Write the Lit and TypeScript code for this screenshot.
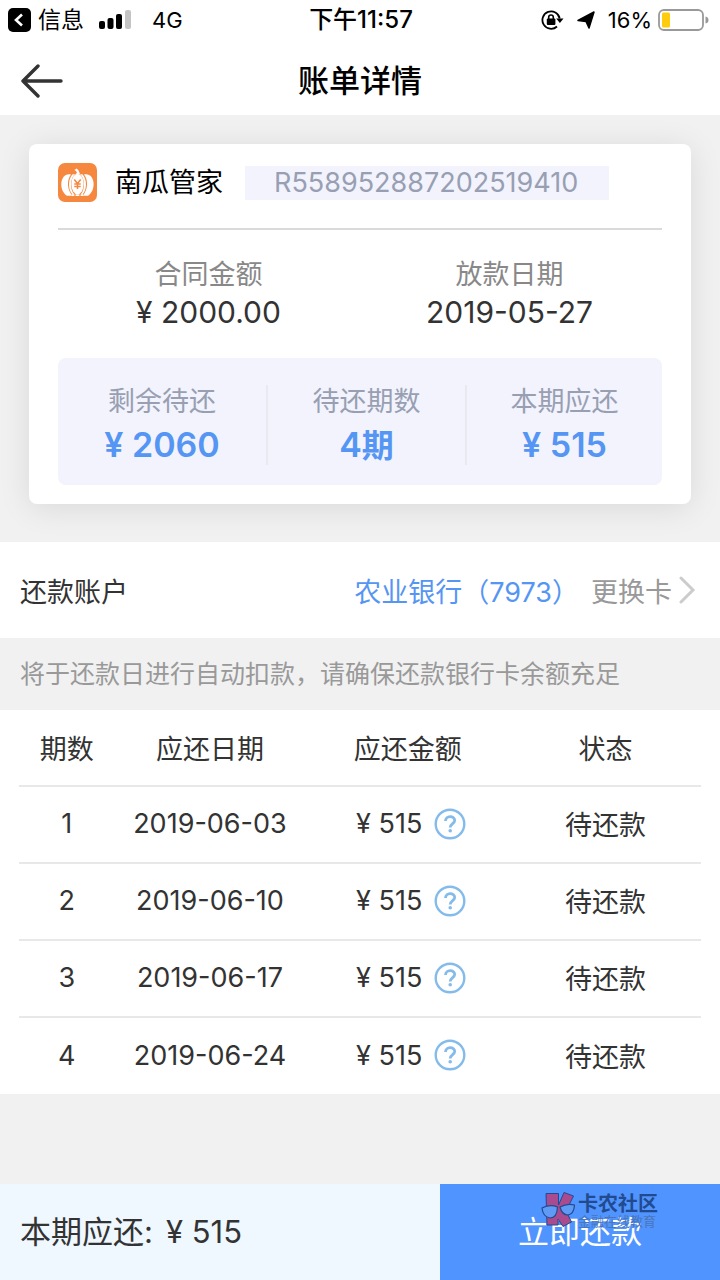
import { LitElement, html, css, svg } from "lit";
import { customElement, state } from "lit/decorators.js";

interface Installment {
  no: number;
  date: string;
  amount: string;
  status: string;
}

const base = css`
  :host {
    display: block;
    box-sizing: border-box;
  }
  *,
  *::before,
  *::after {
    box-sizing: border-box;
  }
  button {
    font: inherit;
    color: inherit;
    background: none;
    border: 0;
    padding: 0;
    cursor: pointer;
  }
  svg {
    display: block;
    flex: none;
  }
`;

@customElement("status-bar")
class StatusBar extends LitElement {
  static styles = [
    base,
    css`
      .bar {
        display: grid;
        grid-template-columns: 1fr auto 1fr;
        align-items: center;
        height: 40px;
        padding: 0 10px 0 8px;
        font-size: 22px;
        line-height: 40px;
        color: #000;
      }
      .side {
        display: flex;
        align-items: center;
      }
      .end {
        justify-content: flex-end;
      }
      .app {
        margin: 0 15px 0 7px;
        font-size: 23px;
      }
      .net {
        margin-left: 20px;
      }
      .time {
        padding-left: 4px;
        font-size: 24px;
        font-weight: 500;
      }
      .arrow {
        margin: 0 13px;
      }
      .pct {
        margin-right: 6px;
      }
    `,
  ];

  render() {
    return html`<div class="bar">
      <div class="side">
        <svg width="23" height="24" viewBox="0 0 23 24">
          <rect width="23" height="24" rx="5" />
          <path d="M14 6.500 L8 12 L14 17.500" fill="none" stroke="#fff" stroke-width="2.600" />
        </svg>
        <span class="app">信息</span>
        <svg width="33" height="20" viewBox="0 0 33 20">
          <rect x="0" y="11" width="6" height="8" rx="2" />
          <rect x="8.500" y="8" width="6" height="11" rx="2" />
          <rect x="17" y="4" width="6" height="15" rx="2" />
          <rect x="26" y="0" width="6" height="19" rx="2" fill="#c4c4c4" />
        </svg>
        <span class="net">4G</span>
      </div>
      <span class="time">下午11:57</span>
      <div class="side end">
        <svg width="23" height="20" viewBox="0 0 23 20">
          <path d="M18.700 8.500 A8.700 8.700 0 1 0 16 16.500" fill="none" stroke="#000" stroke-width="1.800" />
          <path d="M15.200 8.500 H22.500 L18.900 13 Z" />
          <rect x="5.800" y="8.500" width="8.600" height="6.500" rx="1" />
          <path d="M7.700 9 V7.300 A2.300 2.300 0 0 1 12.300 7.300 V9" fill="none" stroke="#000" stroke-width="1.600" />
        </svg>
        <svg class="arrow" width="18" height="18" viewBox="0 0 18 18">
          <path d="M17 1 L12 17 L9 10.500 L1 9.500 Z" stroke="#000" stroke-width="1.500" stroke-linejoin="round" />
        </svg>
        <span class="pct">16%</span>
        <svg width="52" height="22" viewBox="0 0 52 22">
          <rect x="1" y="1" width="44" height="20" rx="5" fill="none" stroke="#999" stroke-width="1.800" />
          <rect x="4" y="3.500" width="8" height="15" rx="1.500" fill="#fecb0e" />
          <path d="M47.500 7.500 Q50.500 8 50.500 11 T47.500 14.500 Z" fill="#999" />
        </svg>
      </div>
    </div>`;
  }
}

@customElement("loan-card")
class LoanCard extends LitElement {
  static styles = [
    base,
    css`
      .card {
        padding: 19px 29px;
        background: #fff;
        border-radius: 8px;
        box-shadow: 0 4px 32px rgba(0, 0, 0, 0.1);
      }
      .head {
        display: flex;
        align-items: center;
        padding-bottom: 26px;
        border-bottom: 2px solid #dadada;
      }
      .name {
        margin: 0 22px 0 18px;
        font-size: 27px;
        line-height: 38px;
        font-weight: 400;
        color: #000;
      }
      .number {
        padding: 0 31px 0 29px;
        font-size: 27px;
        line-height: 34px;
        color: #989fb3;
        background: #f2f3fc;
      }
      dl,
      dd {
        margin: 0;
      }
      .facts {
        display: grid;
        grid-template-columns: 1fr 1fr;
        padding: 26px 2px 28px 0;
        text-align: center;
      }
      dt {
        font-size: 27px;
        line-height: 38px;
        color: #888;
      }
      .facts dd {
        font-size: 30px;
        line-height: 36px;
        color: #333;
      }
      .summary {
        display: grid;
        grid-template-columns: 210px 199px 1fr;
        padding: 27px 0 20px;
        text-align: center;
        background: #f2f3fc;
        border-radius: 8px;
      }
      .summary dt {
        margin-bottom: 6px;
        line-height: 34px;
        color: #989fb3;
      }
      .summary dd {
        font-size: 34px;
        line-height: 40px;
        font-weight: 600;
        color: #5595f3;
      }
      .cell {
        height: 80px;
        border-right: 2px solid #e9eaf0;
      }
      .cell:last-child {
        border: 0;
      }
      .cell .cjk {
        font-size: 32px;
      }
    `,
  ];

  render() {
    return html`<section class="card">
      <div class="head">
        <svg width="39" height="39" viewBox="0 0 39 39" aria-hidden="true">
          <rect width="39" height="39" rx="7" fill="#f5873f" />
          <g fill="#fff">
            <path d="M13 11.500 C2 9 0 27 9 32.800 H14.500 C9 27 8.500 17 13 11.500 Z" />
            <path d="M26 11.500 C37 9 39 27 30 32.800 H24.500 C30 27 30.500 17 26 11.500 Z" />
            <path d="M14.300 11.500 C9.800 17 9.800 27 15 32 L16 31 C11.800 26 11.800 16 17 11 Z" />
            <path d="M24.700 11.500 C29.200 17 29.200 27 24 32 L23 31 C27.200 26 27.200 16 22 11 Z" />
            <ellipse cx="19.500" cy="21" rx="6.200" ry="10.300" />
            <path d="M18 11 C20 9 18 8 16.500 7 L18.500 5.500 C21 7 21 9 22 11 Z" />
            <path d="M14 31.300 H25 V33 H14 Z" />
          </g>
          <path d="M16.300 16.500 L19.500 20.500 L22.700 16.500 M19.500 20.500 V26 M16.300 21 H22.700 M16.300 23.500 H22.700" fill="none" stroke="#f5873f" stroke-width="1.500" />
          <path d="M17 31 V33 M22 31 V33" stroke="#f5873f" stroke-width="1.200" />
        </svg>
        <h2 class="name">南瓜管家</h2>
        <span class="number">R558952887202519410</span>
      </div>
      <dl class="facts">
        <div><dt>合同金额</dt><dd>¥ 2000.00</dd></div>
        <div><dt>放款日期</dt><dd>2019-05-27</dd></div>
      </dl>
      <dl class="summary">
        <div class="cell"><dt>剩余待还</dt><dd>¥ 2060</dd></div>
        <div class="cell"><dt>待还期数</dt><dd>4<span class="cjk">期</span></dd></div>
        <div class="cell"><dt>本期应还</dt><dd>¥ 515</dd></div>
      </dl>
    </section>`;
  }
}

@customElement("repayment-plan")
class RepaymentPlan extends LitElement {
  @state() private rows: Installment[] = [
    { no: 1, date: "2019-06-03", amount: "¥ 515", status: "待还款" },
    { no: 2, date: "2019-06-10", amount: "¥ 515", status: "待还款" },
    { no: 3, date: "2019-06-17", amount: "¥ 515", status: "待还款" },
    { no: 4, date: "2019-06-24", amount: "¥ 515", status: "待还款" },
  ];

  static styles = [
    base,
    css`
      :host {
        padding: 0 19px;
        background: #fff;
      }
      table {
        width: 100%;
        border-collapse: collapse;
        table-layout: fixed;
        color: #333;
      }
      th,
      td {
        height: 77px;
        padding: 0 0 2px;
        font-size: 27px;
        font-weight: 400;
        text-align: center;
      }
      th {
        height: 76px;
        padding: 0;
      }
      td {
        border-top: 2px solid #e8e8e8;
      }
      .no {
        width: 14%;
      }
      .date {
        width: 28%;
      }
      .sum {
        width: 30%;
      }
      .amount {
        display: flex;
        align-items: center;
        justify-content: center;
        gap: 12px;
        padding-left: 7px;
      }
    `,
  ];

  private help() {
    return svg`<svg width="32" height="32" viewBox="0 0 32 32">
      <circle cx="16" cy="16" r="14.300" fill="none" stroke="#85bbea" stroke-width="2.400" />
      <path d="M11.500 13 C11.500 7.300 20.700 7.300 20.700 12.600 C20.700 15.500 16.200 15.800 16.200 19.500" fill="none" stroke="#85bbea" stroke-width="2.800" />
      <circle cx="16.200" cy="22.800" r="1.800" fill="#85bbea" />
    </svg>`;
  }

  render() {
    return html`<table>
      <thead>
        <tr>
          <th class="no" scope="col">期数</th>
          <th class="date" scope="col">应还日期</th>
          <th class="sum" scope="col">应还金额</th>
          <th scope="col">状态</th>
        </tr>
      </thead>
      <tbody>
        ${this.rows.map(
          (r) => html`<tr>
            <td>${r.no}</td>
            <td>${r.date}</td>
            <td>
              <div class="amount">
                <span>${r.amount}</span>
                <button type="button" aria-label="金额说明">${this.help()}</button>
              </div>
            </td>
            <td>${r.status}</td>
          </tr>`
        )}
      </tbody>
    </table>`;
  }
}

@customElement("app-root")
class AppRoot extends LitElement {
  static styles = [
    base,
    css`
      :host {
        display: flex;
        flex-direction: column;
        min-height: 100vh;
        background: #f1f1f1;
        font-family: Inter, "Noto Sans CJK SC", sans-serif;
        color: #333;
      }
      header {
        background: #fff;
      }
      .nav {
        display: grid;
        grid-template-columns: 44px 1fr 44px;
        align-items: center;
        height: 75px;
        padding: 6px 20px 0;
      }
      h1 {
        margin: 0;
        font-size: 31px;
        line-height: 44px;
        font-weight: 500;
        text-align: center;
        color: #000;
      }
      .top {
        padding: 29px 29px 38px;
      }
      .account {
        display: flex;
        align-items: center;
        height: 96px;
        padding: 0 24px 0 20px;
        font-size: 27px;
        background: #fff;
      }
      .bank {
        margin-left: auto;
        color: #5595f3;
      }
      .change {
        display: flex;
        align-items: center;
        gap: 7px;
        margin-left: 12px;
        color: #999;
      }
      .notice {
        margin: 0;
        padding: 0 20px;
        font-size: 25px;
        line-height: 72px;
        color: #999;
      }
      footer {
        position: relative;
        display: grid;
        grid-template-columns: 11fr 7fr;
        height: 96px;
        margin-top: auto;
        font-size: 31px;
        line-height: 96px;
      }
      .due {
        display: flex;
        gap: 13px;
        padding-left: 20px;
        background: #eff7ff;
      }
      .pay {
        color: #fff;
        background: #5094ff;
      }
      .mark {
        position: absolute;
        top: 8px;
        right: 62px;
        display: flex;
        gap: 3px;
        color: #224a8f;
        pointer-events: none;
      }
      .brand {
        font-size: 20px;
        line-height: 24px;
        font-weight: 700;
      }
      .tag {
        font-size: 13px;
        line-height: 10px;
        color: #4a75b8;
      }
    `,
  ];

  render() {
    return html`
      <header>
        <status-bar></status-bar>
        <div class="nav">
          <button class="back" type="button" aria-label="返回">
            <svg width="44" height="34" viewBox="0 0 44 34">
              <path d="M18 2 L3 17 L18 32 M3 17 H41" fill="none" stroke="#333" stroke-width="3.400" stroke-linecap="round" stroke-linejoin="round" />
            </svg>
          </button>
          <h1>账单详情</h1>
        </div>
      </header>
      <div class="top"><loan-card></loan-card></div>
      <div class="account">
        <span>还款账户</span>
        <span class="bank">农业银行（7973）</span>
        <button class="change" type="button">
          更换卡
          <svg width="17" height="28" viewBox="0 0 17 28">
            <path d="M2 2 L14 14 L2 26" fill="none" stroke="#ccc" stroke-width="3" stroke-linecap="round" />
          </svg>
        </button>
      </div>
      <p class="notice">将于还款日进行自动扣款，请确保还款银行卡余额充足</p>
      <repayment-plan></repayment-plan>
      <footer>
        <div class="due"><span>本期应还:</span><span>¥ 515</span></div>
        <button class="pay" type="button">立即还款</button>
        <div class="mark">
          <svg width="34" height="36" viewBox="0 0 34 36">
            <path d="M5 1.500 H17.500 V13 L23 0.500 L32.500 4 L25 19 L30.500 30 L22 34.500 L17 27 V33 H6 Z" fill="#a94b8e" stroke="#224a8f" />
            <g fill="#5f9bf5" stroke="#224a8f" stroke-width="1.200">
              <path d="M1 16 Q9 12 16.500 15 Q16 26 9 26 Q2 25 1 16 Z" />
              <path d="M19 15 Q26 11 33.500 13 Q33 22 27 23 Q21 23 19 15 Z" />
            </g>
          </svg>
          <div>
            <div class="brand">卡农社区</div>
            <div class="tag">金融在线教育</div>
          </div>
        </div>
      </footer>
    `;
  }
}
